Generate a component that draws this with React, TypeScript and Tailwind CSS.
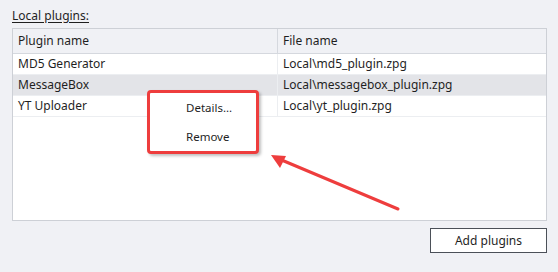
import React from "react";

const rows = [
  { name: "MD5 Generator", file: "Local\\md5_plugin.zpg", sel: false },
  { name: "MessageBox", file: "Local\\messagebox_plugin.zpg", sel: true },
  { name: "YT Uploader", file: "Local\\yt_plugin.zpg", sel: false },
];

export default function App() {
  return (
    <div
      className="relative w-[558px] h-[272px] bg-[#f0f1f5] text-[#1f1f1f] text-[12px] overflow-hidden"
      style={{ fontFamily: '"Noto Sans", "Liberation Sans", sans-serif' }}
    >
      <div className="pl-[12px] pt-[8px] pr-[11px]">
        <div className="h-[20px] leading-[15px] underline underline-offset-2">Local plugins:</div>
        <div className="h-[193px] border border-[#cdd0d6] bg-white flex flex-col">
          <div className="flex h-[25px] bg-[#f0f1f5] border-b border-[#d5d8de] items-center">
            <div className="w-[265px] pl-[5px] border-r border-[#d5d8de] h-full flex items-center">Plugin name</div>
            <div className="flex-1 pl-[5px]">File name</div>
          </div>
          {rows.map((r) => (
            <div
              key={r.name}
              className={`flex h-[21px] items-center border-b border-[#eceef1] ${r.sel ? "bg-[#e3e4e8]" : "bg-white"}`}
            >
              <div className="w-[265px] pl-[5px] border-r border-[#eceef1] h-full flex items-center">{r.name}</div>
              <div className="flex-1 pl-[5px]">{r.file}</div>
            </div>
          ))}
        </div>
        <div className="flex justify-end pt-[7px] pr-0">
          <button className="w-[117px] h-[25px] border border-[#4b5058] bg-white flex items-center justify-center text-[12px]">
            Add plugins
          </button>
        </div>
      </div>

      <div className="absolute left-[147px] top-[90px] w-[112px] h-[64px] bg-white border-[3px] border-[#ee3d3d] rounded-[4px] shadow-[2px_2px_3px_rgba(0,0,0,0.25)] flex flex-col justify-center gap-[11px] pl-[36px] text-[11.5px]">
        <div>Details...</div>
        <div>Remove</div>
      </div>

      <svg className="absolute left-0 top-0" width="558" height="272">
        <line x1="398" y1="209" x2="278" y2="158.5" stroke="#ee3d3d" strokeWidth="3" strokeLinecap="round" />
        <polygon points="271,155 286,156 280,168" fill="#ee3d3d" />
      </svg>
    </div>
  );
}
